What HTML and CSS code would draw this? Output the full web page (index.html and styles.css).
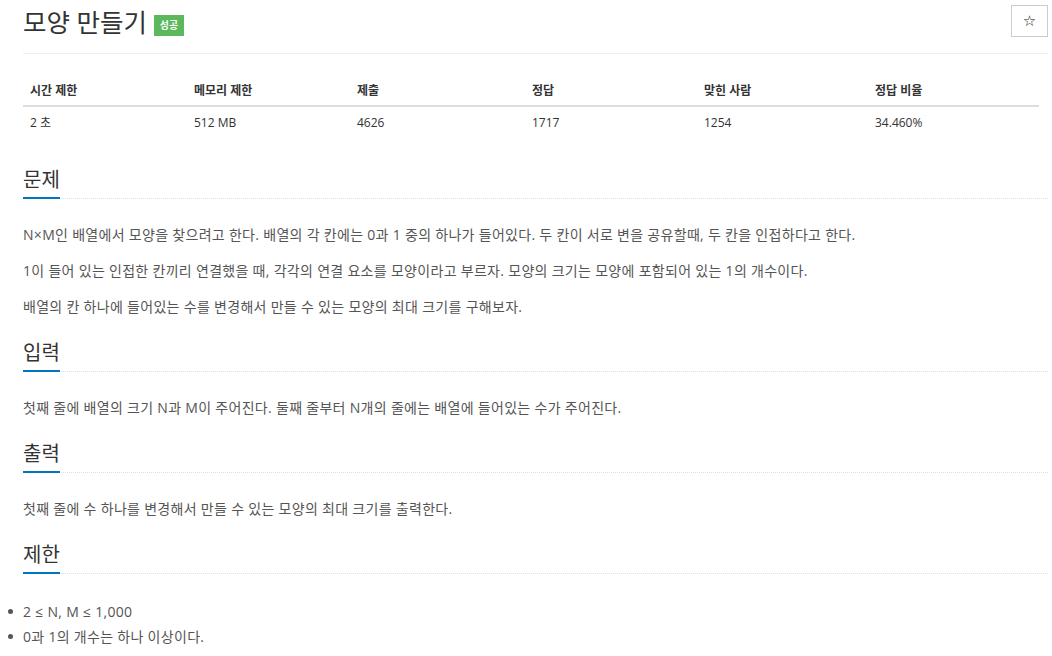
FILE: index.html
```html
<!DOCTYPE html>
<html lang="ko">
<head>
<meta charset="utf-8">
<title>모양 만들기</title>
<link rel="stylesheet" href="styles.css">
</head>
<body>
<div class="page">
  <div class="page-header">
    <h1 class="title">모양 만들기 <span class="badge">성공</span></h1>
    <button class="star" type="button">☆</button>
  </div>

  <div class="info">
    <div class="row head">
      <div>시간 제한</div><div>메모리 제한</div><div>제출</div><div>정답</div><div>맞힌 사람</div><div>정답 비율</div>
    </div>
    <div class="row">
      <div>2 초</div><div>512 MB</div><div>4626</div><div>1717</div><div>1254</div><div>34.460%</div>
    </div>
  </div>

  <section class="sec">
    <h2 class="headline"><span>문제</span></h2>
    <div class="text">
      <p>N×M인 배열에서 모양을 찾으려고 한다. 배열의 각 칸에는 0과 1 중의 하나가 들어있다. 두 칸이 서로 변을 공유할때, 두 칸을 인접하다고 한다.</p>
      <p>1이 들어 있는 인접한 칸끼리 연결했을 때, 각각의 연결 요소를 모양이라고 부르자. 모양의 크기는 모양에 포함되어 있는 1의 개수이다.</p>
      <p>배열의 칸 하나에 들어있는 수를 변경해서 만들 수 있는 모양의 최대 크기를 구해보자.</p>
    </div>
  </section>

  <section class="sec">
    <h2 class="headline"><span>입력</span></h2>
    <div class="text">
      <p>첫째 줄에 배열의 크기 N과 M이 주어진다. 둘째 줄부터 N개의 줄에는 배열에 들어있는 수가 주어진다.</p>
    </div>
  </section>

  <section class="sec">
    <h2 class="headline"><span>출력</span></h2>
    <div class="text">
      <p>첫째 줄에 수 하나를 변경해서 만들 수 있는 모양의 최대 크기를 출력한다.</p>
    </div>
  </section>

  <section class="sec">
    <h2 class="headline"><span>제한</span></h2>
    <ul class="limits">
      <li>2 ≤ N, M ≤ 1,000</li>
      <li>0과 1의 개수는 하나 이상이다.</li>
    </ul>
  </section>
</div>
</body>
</html>
```

FILE: styles.css
```css
html, body {
  margin: 0;
  padding: 0;
  background: #fff;
}
body {
  font-family: "Open Sans", "Noto Sans CJK KR", sans-serif;
  font-size: 14px;
  color: #555;
  overflow: hidden;
}
.page {
  padding: 0 4px 0 23px;
}
.page-header {
  display: flex;
  justify-content: space-between;
  align-items: flex-start;
  padding-top: 5px;
  height: 48px;
  border-bottom: 1px solid #eee;
}
.title {
  margin: 0;
  font-size: 25.5px;
  font-weight: 400;
  line-height: 34px;
  color: #333;
  display: flex;
  align-items: center;
}
.badge {
  display: inline-block;
  margin-left: 7px;
  margin-top: 6px;
  width: 30px;
  height: 21px;
  line-height: 21px;
  text-align: center;
  background: #5cb85c;
  color: #fff;
  font-size: 10px;
  font-weight: 700;
}
.star {
  width: 37px;
  height: 32px;
  margin: 0;
  padding: 0;
  border: 1px solid #ccc;
  background: #fff;
  color: #222;
  font-size: 15px;
  font-family: "DejaVu Sans", sans-serif;
  line-height: 30px;
}
.info {
  width: 1016px;
  margin-top: 23px;
  font-size: 12px;
  color: #333;
}
.row {
  display: grid;
  grid-template-columns: 164px 163px 175px 172px 171px 171px;
}
.row > div {
  padding: 0 7px;
}
.row.head {
  font-weight: 700;
  border-bottom: 2px solid #ddd;
}
.row.head > div {
  line-height: 28px;
}
.row:not(.head) > div {
  line-height: 32px;
}
.sec {
  margin-top: 21px;
}
.sec:first-of-type {
  margin-top: 27px;
}
.headline {
  margin: 0;
  font-size: 20px;
  font-weight: 400;
  line-height: 28px;
  color: #333;
  border-bottom: 1px dotted #ddd;
  display: flex;
}
.headline span {
  display: inline-block;
  padding-bottom: 3px;
  border-bottom: 2px solid #0076c0;
  margin-bottom: -1px;
}
.text {
  padding-top: 25px;
}
.text p {
  margin: 0 0 14px;
  line-height: 22px;
  letter-spacing: 0.3px;
}
.limits {
  margin: 0;
  padding: 25px 0 0 0;
  list-style: none;
}
.limits li {
  position: relative;
  line-height: 25px;
  letter-spacing: 0.3px;
}
.limits li::before {
  content: "";
  position: absolute;
  left: -15px;
  top: 10px;
  width: 5px;
  height: 5px;
  border-radius: 50%;
  background: #555;
}
```
